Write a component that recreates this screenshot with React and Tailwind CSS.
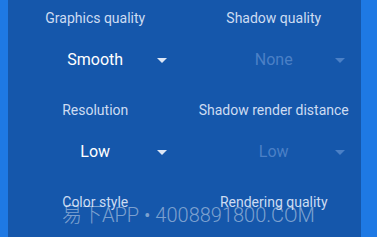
import React from "react";

const settings = [
  { label: "Graphics quality", value: "Smooth", disabled: false },
  { label: "Shadow quality", value: "None", disabled: true },
  { label: "Resolution", value: "Low", disabled: false },
  { label: "Shadow render distance", value: "Low", disabled: true },
  { label: "Color style", value: "", disabled: false },
  { label: "Rendering quality", value: "", disabled: false },
];

function Setting({ label, value, disabled }) {
  return (
    <div className="flex h-[92px] flex-col items-center">
      <div className="h-5 whitespace-nowrap text-[14px] leading-5 text-[#cddcf2]">
        {label}
      </div>
      {value && (
        <div className="relative mt-[20px] h-6 w-full">
          <div
            className={`text-center text-[16px] leading-6 ${
              disabled ? "text-[#4b80c6]" : "text-white"
            }`}
          >
            {value}
          </div>
          <svg
            className="absolute right-4 top-[10px]"
            width="10"
            height="5"
            viewBox="0 0 10 5"
          >
            <path d="M0 0 L10 0 L5 5 Z" fill={disabled ? "#4b80c6" : "#dde7f6"} />
          </svg>
        </div>
      )}
    </div>
  );
}

export default function App() {
  return (
    <div
      className="relative flex h-[237px] w-full overflow-hidden bg-[#1e79e4]"
      style={{ fontFamily: "Roboto, 'Noto Sans CJK SC', sans-serif" }}
    >
      <div className="ml-[8px] h-full w-[353px] bg-[#1557ab]">
        <div className="grid grid-cols-2 gap-x-[4px] pt-[8px]">
          {settings.map((s) => (
            <Setting key={s.label} {...s} />
          ))}
        </div>
      </div>

      {/* watermark */}
      <div className="pointer-events-none absolute left-[62px] top-[203px] whitespace-nowrap text-[20px] font-light leading-6 text-white/45">
        易下APP • 4008891800.COM
      </div>
    </div>
  );
}
